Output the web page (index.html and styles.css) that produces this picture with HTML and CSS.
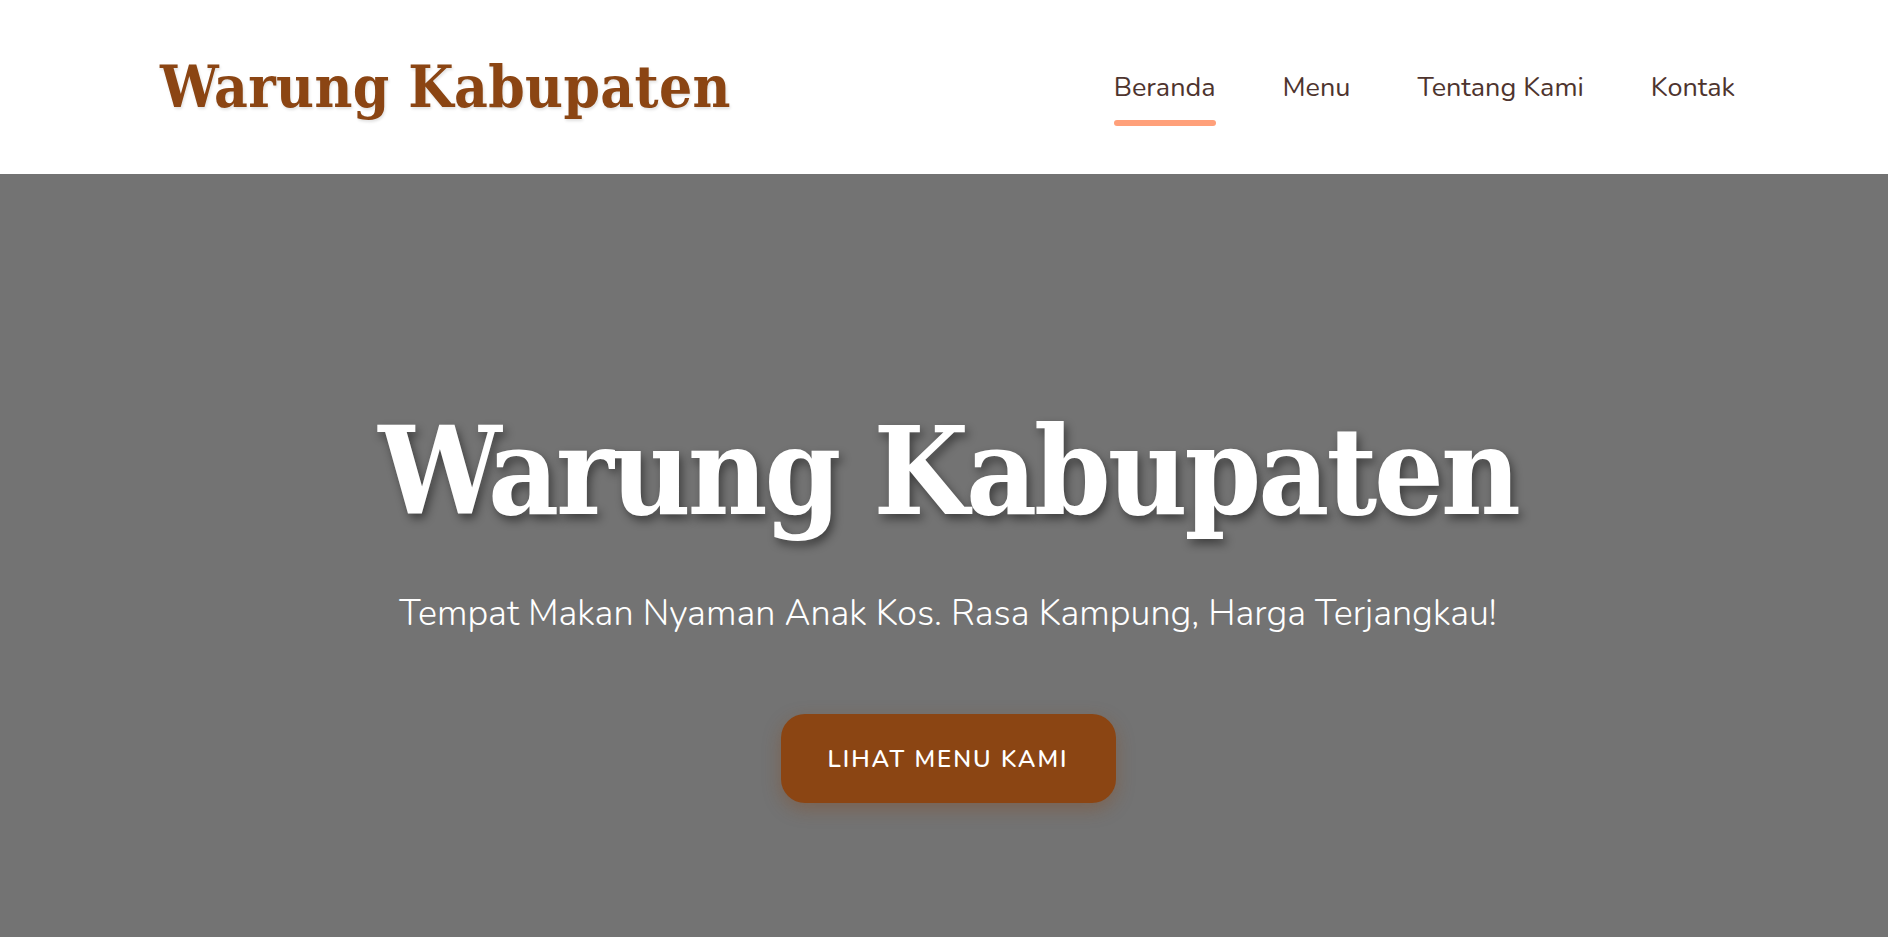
FILE: index.html
```html
<!DOCTYPE html>
<html lang="id">
<head>
<meta charset="utf-8">
<title>Warung Kabupaten</title>
<link rel="stylesheet" href="styles.css">
</head>
<body>
<header class="site-header">
  <a class="logo" href="#">Warung Kabupaten</a>
  <nav class="main-nav">
    <a class="nav-link active" href="#">Beranda</a>
    <a class="nav-link" href="#">Menu</a>
    <a class="nav-link" href="#">Tentang Kami</a>
    <a class="nav-link" href="#">Kontak</a>
  </nav>
</header>
<section class="hero">
  <h1 class="hero-title">Warung Kabupaten</h1>
  <p class="hero-sub">Tempat Makan Nyaman Anak Kos. Rasa Kampung, Harga Terjangkau!</p>
  <a class="hero-btn" href="#">LIHAT MENU KAMI</a>
</section>
</body>
</html>
```

FILE: styles.css
```css
* { box-sizing: border-box; }
html, body { margin: 0; padding: 0; }
body {
  font-family: "Nunito", "Lato", "Open Sans", sans-serif;
  background: #737373;
  overflow: hidden;
}
a { text-decoration: none; }

.site-header {
  height: 174px;
  background: #ffffff;
  display: flex;
  align-items: center;
  justify-content: space-between;
  padding: 0 153px 0 160px;
}
.logo {
  font-family: "DejaVu Serif Condensed", "DejaVu Serif", serif;
  font-stretch: condensed;
  font-weight: 700;
  font-size: 58px;
  letter-spacing: 0.4px;
  color: #8b4513;
  text-shadow: 1px 2px 3px rgba(0,0,0,0.12);
}
.main-nav {
  display: flex;
  gap: 67px;
}
.nav-link {
  position: relative;
  font-size: 27px;
  color: #4e342e;
  padding: 8px 0;
}
.nav-link.active::after {
  content: "";
  position: absolute;
  left: 0;
  right: 0;
  bottom: -12px;
  height: 6px;
  border-radius: 3px;
  background: #ffa07a;
}

.hero {
  background: #737373;
  height: 763px;
  display: flex;
  flex-direction: column;
  align-items: center;
  padding: 230px 0 0 8px;
  color: #ffffff;
  text-align: center;
}
.hero-title {
  margin: 0;
  font-family: "DejaVu Serif Condensed", "DejaVu Serif", serif;
  font-stretch: condensed;
  font-weight: 700;
  font-size: 122px;
  line-height: 1.1;
  letter-spacing: -3px;
  text-shadow: 3px 5px 10px rgba(0,0,0,0.45);
}
.hero-sub {
  margin: 51px 0 0;
  font-size: 36px;
  font-weight: 300;
}
.hero-btn {
  margin-top: 76px;
  width: 335px;
  height: 89px;
  display: flex;
  align-items: center;
  justify-content: center;
  background: #8b4513;
  color: #ffffff;
  border-radius: 24px;
  font-size: 24px;
  font-weight: 600;
  letter-spacing: 2px;
  box-shadow: 0 6px 18px rgba(139,69,19,0.35);
}
```
